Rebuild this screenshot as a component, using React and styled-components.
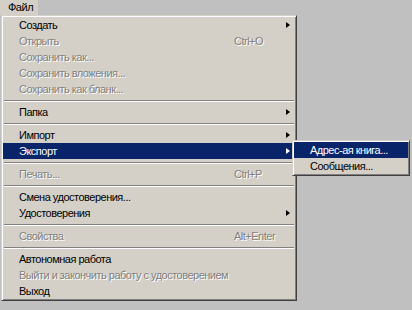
import React from "react";
import styled, { createGlobalStyle } from "styled-components";

const GlobalStyle = createGlobalStyle`
  html, body {
    margin: 0;
    padding: 0;
    background: #c0c0c0;
  }
  body {
    width: 412px;
    height: 310px;
    overflow: hidden;
    font-family: "Liberation Sans", Arial, sans-serif;
    font-size: 11px;
    letter-spacing: -0.5px;
  }
`;

const Screen = styled.div`
  width: 412px;
  height: 310px;
  background: #c0c0c0;
  display: flex;
  flex-direction: column;
`;

const MenuBar = styled.div`
  display: flex;
  height: 15px;
`;

const BarItem = styled.div`
  width: 38px;
  padding-left: 8px;
  box-sizing: border-box;
  background: #d4d0c8;
  color: #000;
  line-height: 15px;
`;

const Menu = styled.div`
  position: relative;
  width: 296px;
  margin-left: 1px;
  box-sizing: border-box;
  background: #d4d0c8;
  border: 1px solid;
  border-color: #d4d0c8 #404040 #404040 #d4d0c8;
  box-shadow: inset 1px 1px #ffffff, inset -1px -1px #808080;
  padding: 1px;
  display: flex;
  flex-direction: column;
`;

const Row = styled.div`
  position: relative;
  display: grid;
  grid-template-columns: 16px 215px 1fr 14px;
  align-items: center;
  height: 16px;
  line-height: 16px;
  white-space: nowrap;
  background: ${(p) => (p.$active ? "#0a246a" : "transparent")};
  color: ${(p) => (p.$active ? "#ffffff" : p.$disabled ? "#808080" : "#000000")};
  text-shadow: ${(p) => (p.$disabled ? "1px 1px 0 #ffffff" : "none")};
`;

const Label = styled.span`
  grid-column: 2;
  overflow: visible;
`;

const Shortcut = styled.span`
  grid-column: 3;
`;

const Arrow = styled.span`
  grid-column: 4;
  width: 0;
  height: 0;
  margin-left: 5px;
  border-top: 3.5px solid transparent;
  border-bottom: 3.5px solid transparent;
  border-left: 4px solid ${(p) => (p.$active ? "#ffffff" : "#000000")};
`;

const Separator = styled.div`
  height: 7px;
  display: flex;
  flex-direction: column;
  justify-content: center;
  padding: 0 1px;
  &::before {
    content: "";
    display: block;
    height: 1px;
    background: #808080;
  }
  &::after {
    content: "";
    display: block;
    height: 1px;
    background: #ffffff;
  }
`;

const SubMenu = styled(Menu)`
  position: absolute;
  top: -3px;
  left: calc(100% - 3px);
  width: 118px;
  margin-left: 0;
  z-index: 2;
`;

const SubRow = styled(Row)`
  grid-template-columns: 16px 1fr;
`;

const items = [
  { label: "Создать", arrow: true },
  { label: "Открыть", disabled: true, shortcut: "Ctrl+O" },
  { label: "Сохранить как...", disabled: true },
  { label: "Сохранить вложения...", disabled: true },
  { label: "Сохранить как бланк...", disabled: true },
  { sep: true },
  { label: "Папка", arrow: true },
  { sep: true },
  { label: "Импорт", arrow: true },
  { label: "Экспорт", arrow: true, active: true, sub: ["Адрес-ая книга...", "Сообщения..."] },
  { sep: true },
  { label: "Печать...", disabled: true, shortcut: "Ctrl+P" },
  { sep: true },
  { label: "Смена удостоверения..." },
  { label: "Удостоверения", arrow: true },
  { sep: true },
  { label: "Свойства", disabled: true, shortcut: "Alt+Enter" },
  { sep: true },
  { label: "Автономная работа" },
  { label: "Выйти и закончить работу с удостоверением", disabled: true },
  { label: "Выход" },
];

export default function App() {
  return (
    <Screen>
      <GlobalStyle />
      <MenuBar>
        <BarItem>Файл</BarItem>
      </MenuBar>
      <Menu>
        {items.map((item, i) =>
          item.sep ? (
            <Separator key={i} />
          ) : (
            <Row key={i} $active={item.active} $disabled={item.disabled}>
              <Label>{item.label}</Label>
              {item.shortcut && <Shortcut>{item.shortcut}</Shortcut>}
              {item.arrow && <Arrow $active={item.active} />}
              {item.sub && (
                <SubMenu>
                  {item.sub.map((s, j) => (
                    <SubRow key={j} $active={j === 0}>
                      <Label>{s}</Label>
                    </SubRow>
                  ))}
                </SubMenu>
              )}
            </Row>
          )
        )}
      </Menu>
    </Screen>
  );
}
